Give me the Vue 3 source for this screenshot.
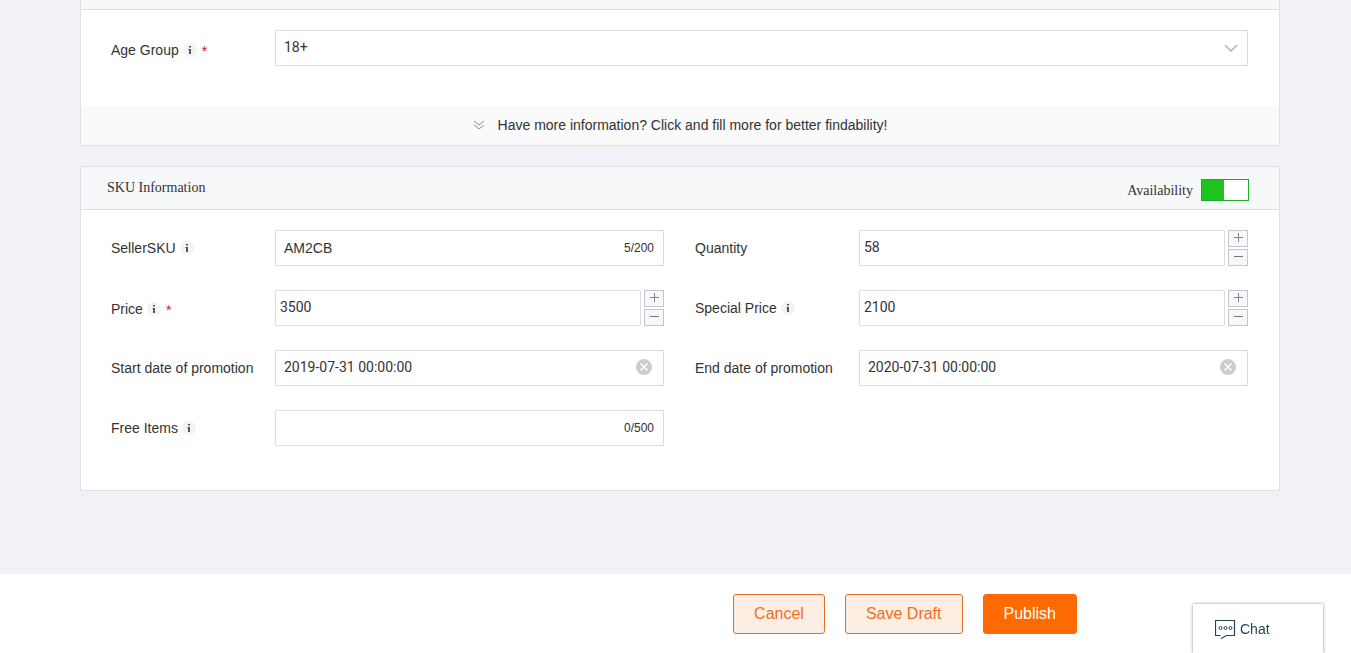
<script setup>
import { ref, reactive } from 'vue'

const ageGroup = ref('18+')
const available = ref(true)

const fields = reactive([
  { id: 'seller-sku', label: 'SellerSKU', info: true, type: 'text', value: 'AM2CB', max: 200 },
  { id: 'quantity', label: 'Quantity', type: 'number', value: '58' },
  { id: 'price', label: 'Price', info: true, required: true, type: 'number', value: '3500' },
  { id: 'special-price', label: 'Special Price', info: true, type: 'number', value: '2100' },
  { id: 'start-date', label: 'Start date of promotion', type: 'date', value: '2019-07-31 00:00:00' },
  { id: 'end-date', label: 'End date of promotion', type: 'date', value: '2020-07-31 00:00:00' },
  { id: 'free-items', label: 'Free Items', info: true, type: 'text', value: '', max: 500 },
])

function step(field, by) {
  field.value = String(Math.max(0, Number(field.value) + by))
}
</script>

<template>
  <div class="page">
    <main class="content">
      <section class="card">
        <div class="card-head card-head-cut"></div>
        <div class="card-body card-body-age">
          <div class="field">
            <label class="label" for="age-group">
              Age Group
              <svg class="info" viewBox="0 0 14 14" aria-hidden="true">
                <circle cx="7" cy="7" r="7" fill="#f3f3f3" />
                <path d="M6 3h2v1.500H6zM6 6h2v5H6z" fill="#555" />
                <path d="M5 6h1v1H5z" fill="#999" />
              </svg>
              <span class="star">*</span>
            </label>
            <div class="box">
              <select id="age-group" v-model="ageGroup" class="control select">
                <option>18+</option>
              </select>
              <svg class="chevron" viewBox="0 0 14 8" aria-hidden="true">
                <path d="M1 1l6 6 6-6" fill="none" stroke="#b4b4b8" stroke-width="1.5" />
              </svg>
            </div>
          </div>
        </div>
        <button type="button" class="more">
          <svg class="more-icon" viewBox="0 0 12 10" aria-hidden="true">
            <path d="M1 1l5 4 5-4M1 5l5 4 5-4" fill="none" stroke="#888" />
          </svg>
          Have more information? Click and fill more for better findability!
        </button>
      </section>

      <section class="card">
        <header class="card-head">
          <h2 class="title">SKU Information</h2>
          <label class="availability">
            <span class="availability-text">Availability</span>
            <input v-model="available" type="checkbox" class="toggle" />
          </label>
        </header>
        <div class="card-body grid">
          <div v-for="f in fields" :key="f.id" class="field">
            <label class="label" :class="{ required: f.required }" :for="f.id">
              {{ f.label }}
              <svg v-if="f.info" class="info" viewBox="0 0 14 14" aria-hidden="true">
                <circle cx="7" cy="7" r="7" fill="#f3f3f3" />
                <path d="M6 3h2v1.500H6zM6 6h2v5H6z" fill="#555" />
                <path d="M5 6h1v1H5z" fill="#999" />
              </svg>
              <span v-if="f.required" class="star">*</span>
            </label>

            <div v-if="f.type === 'text'" class="box">
              <input :id="f.id" v-model="f.value" type="text" class="control plain" :maxlength="f.max" />
              <span class="count">{{ f.value.length }}/{{ f.max }}</span>
            </div>

            <div v-else-if="f.type === 'number'" class="number">
              <div class="box">
                <input :id="f.id" v-model="f.value" type="text" inputmode="numeric" class="control numeric" />
              </div>
              <div class="steps">
                <button type="button" class="step" aria-label="Increase" @click="step(f, 1)">
                  <svg viewBox="0 0 9 9"><path d="M0 4.500h9M4.500 0v9" stroke="#888" /></svg>
                </button>
                <button type="button" class="step" aria-label="Decrease" @click="step(f, -1)">
                  <svg viewBox="0 0 9 9"><path d="M0 4.500h9" stroke="#777" /></svg>
                </button>
              </div>
            </div>

            <div v-else class="box">
              <input :id="f.id" v-model="f.value" type="text" class="control" />
              <button type="button" class="clear" aria-label="Clear" @click="f.value = ''">
                <svg viewBox="0 0 16 16">
                  <circle cx="8" cy="8" r="8" fill="#ccc" />
                  <path d="M4.500 4.500l7 7M11.500 4.500l-7 7" stroke="#fff" stroke-width="1.400" />
                </svg>
              </button>
            </div>
          </div>
        </div>
      </section>
    </main>

    <footer class="footer">
      <button type="button" class="btn">Cancel</button>
      <button type="button" class="btn">Save Draft</button>
      <button type="button" class="btn primary">Publish</button>
    </footer>

    <button type="button" class="chat">
      <svg class="chat-icon" viewBox="0 0 21 19" aria-hidden="true">
        <path d="M5.500 15.500H.5V.5h19v15h-8L6 18.500" fill="none" stroke="#1f4456" stroke-width="1.200" />
        <g fill="none" stroke="#1f4456">
          <circle cx="5.500" cy="8" r="1.500" />
          <circle cx="10.500" cy="8" r="1.500" />
          <circle cx="15.500" cy="8" r="1.500" />
        </g>
      </svg>
      <span class="chat-text">Chat</span>
    </button>
  </div>
</template>

<style>
body {
  background: #f0f2f7;
}
</style>

<style scoped>
.page {
  display: flex;
  flex-direction: column;
  min-height: 100vh;
  font: 14px/20px "Liberation Sans", Arial, sans-serif;
  color: #333;
}

.page *,
.page {
  box-sizing: border-box;
}

button {
  font: inherit;
  color: inherit;
  cursor: pointer;
}

.content {
  display: flex;
  flex-direction: column;
  gap: 20px;
  flex: 1;
  padding: 0 71px 20px 80px;
}

.card {
  background: #fff;
  border: 1px solid #dcdfe6;
}

.card:first-child {
  border-top: 0;
}

.card-head {
  display: flex;
  justify-content: space-between;
  align-items: center;
  height: 43px;
  padding: 0 30px 0 26px;
  background: #f6f8fa;
  border-bottom: 1px solid #dcdfe6;
  font-family: "Liberation Serif", "Times New Roman", serif;
}

.card-head-cut {
  height: 10px;
}

.title {
  margin: 0;
  font-size: 14px;
  font-weight: 400;
}

.availability {
  display: flex;
  align-items: center;
  gap: 8px;
  padding-top: 4px;
}

.availability-text {
  padding-top: 2px;
}

.toggle {
  appearance: none;
  width: 48px;
  height: 22px;
  margin: 0;
  border: 1px solid #ccc;
  background: linear-gradient(#ccc, #ccc) right / 22px 100% no-repeat #fff;
}

.toggle:checked {
  border-color: #1fae2a;
  background: linear-gradient(#1ec31e, #1ec31e) left / 22px 100% no-repeat #fff;
}

.card-body {
  padding: 20px 31px 44px 30px;
}

.card-body-age {
  padding-bottom: 40px;
}

.grid {
  display: grid;
  grid-template-columns: 1fr 1fr;
  gap: 24px 31px;
}

.field {
  display: grid;
  grid-template-columns: 164px 1fr;
  height: 36px;
}

.label {
  display: flex;
  align-items: center;
  gap: 4px;
}

.required {
  padding-top: 2px;
}

.card-body-age .label {
  padding-top: 4px;
}

.info {
  width: 14px;
  height: 14px;
}

.star {
  padding: 2px 0 0 1px;
  color: #f02;
}

.box {
  display: flex;
  align-items: center;
  flex: 1;
  min-width: 0;
  border: 1px solid #dadce0;
  border-radius: 1px;
  background: #fff;
}

.control {
  flex: 1;
  min-width: 0;
  width: 100%;
  height: 34px;
  padding: 0 8px 2px;
  border: 0;
  outline: 0;
  background: transparent;
  font: 14px/20px Roboto, sans-serif;
  color: #333;
}

.plain {
  padding-bottom: 0;
  font-family: "Liberation Sans", Arial, sans-serif;
}

.numeric {
  padding-left: 4px;
}

.select {
  appearance: none;
}

.chevron {
  width: 14px;
  height: 8px;
  margin-right: 9px;
}

.count {
  padding-right: 9px;
  font-size: 12px;
}

.number {
  display: flex;
  gap: 3px;
}

.steps {
  display: flex;
  flex-direction: column;
  gap: 2px;
}

.step {
  display: flex;
  align-items: center;
  justify-content: center;
  width: 20px;
  height: 17px;
  padding: 0 0 2px;
  border: 1px solid #c4c6cf;
  background: #f7f8fa;
}

.step svg {
  width: 9px;
  height: 9px;
}

.clear {
  display: flex;
  margin-right: 11px;
  margin-bottom: 2px;
  padding: 0;
  border: 0;
  background: none;
}

.clear svg {
  width: 16px;
  height: 16px;
}

.more {
  display: flex;
  align-items: center;
  justify-content: center;
  gap: 13px;
  width: 100%;
  height: 39px;
  padding: 0 0 2px;
  border: 0;
  background: #fafafa;
}

.more-icon {
  width: 12px;
  height: 10px;
}

.footer {
  display: flex;
  justify-content: flex-end;
  gap: 20px;
  padding: 20px 274px 19px 20px;
  background: #fff;
}

.btn {
  height: 40px;
  padding: 0 20px;
  border: 1px solid #e0702c;
  border-radius: 3px;
  background: #fdeee4;
  font-size: 16px;
  color: #f0701e;
}

.primary {
  border-color: #ff6a00;
  background: #ff6a00;
  color: #fff;
}

.chat {
  position: fixed;
  right: 28px;
  bottom: 0;
  display: flex;
  align-items: center;
  gap: 4px;
  width: 130px;
  height: 49px;
  padding: 2px 22px 0;
  border: 0;
  background: #fff;
  box-shadow: 0 0 3px rgba(0, 0, 0, 0.45);
  color: #1f4456;
}

.chat-icon {
  width: 21px;
  height: 19px;
}

.chat-text {
  padding-bottom: 2px;
}
</style>
